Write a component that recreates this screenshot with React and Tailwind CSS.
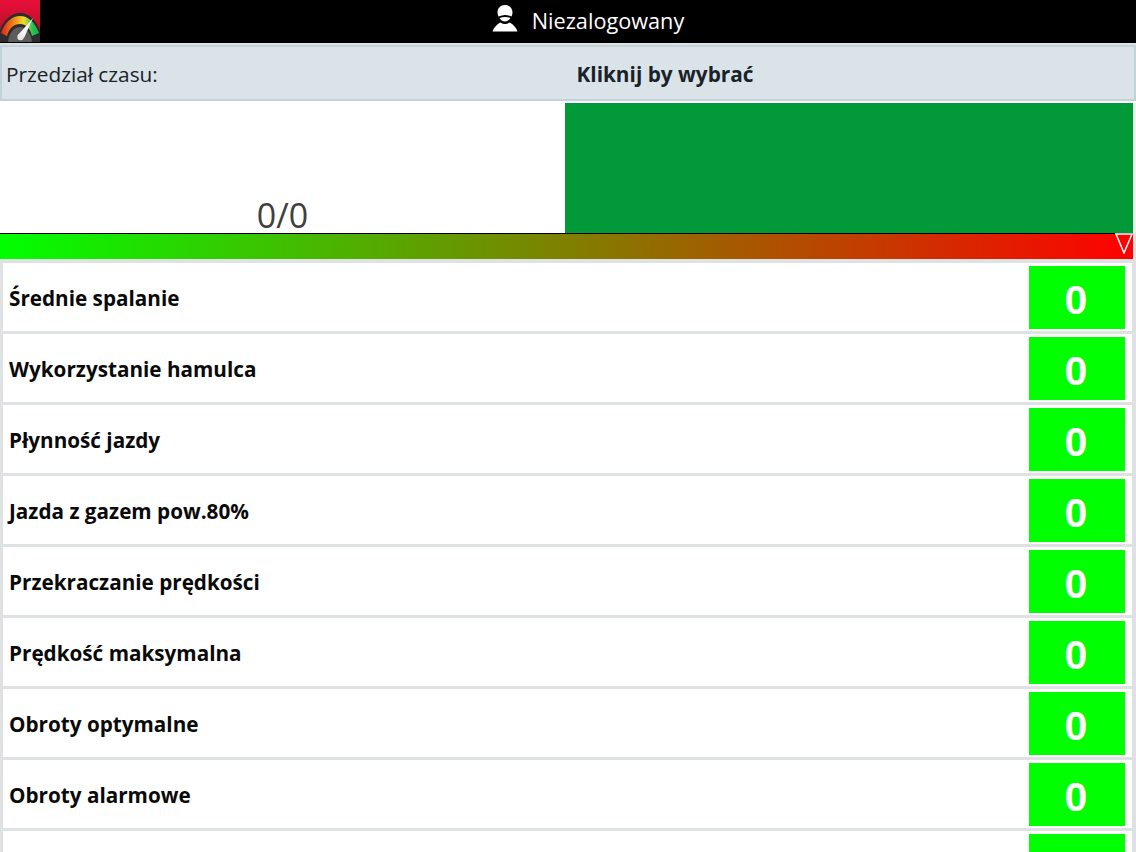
const FONT = 'font-["Open_Sans","Noto_Sans",sans-serif]';

const rows = [
  { label: 'Średnie spalanie', value: 0 },
  { label: 'Wykorzystanie hamulca', value: 0 },
  { label: 'Płynność jazdy', value: 0 },
  { label: 'Jazda z gazem pow.80%', value: 0 },
  { label: 'Przekraczanie prędkości', value: 0 },
  { label: 'Prędkość maksymalna', value: 0 },
  { label: 'Obroty optymalne', value: 0 },
  { label: 'Obroty alarmowe', value: 0 },
  { label: '', value: null }, // only the top of this row fits on screen
];

const Gauge = () => (
  <svg width="40" height="42" viewBox="0 0 40 42" className="block">
    <defs>
      <linearGradient id="red" x1="0" y1="0" x2="0" y2="1">
        <stop offset="0" stopColor="#e8103a" />
        <stop offset="1" stopColor="#a80f22" />
      </linearGradient>
      <linearGradient id="arc" x1="0" y1="0" x2="1" y2="0">
        <stop offset="0" stopColor="#e0201c" />
        <stop offset="0.4" stopColor="#f09a18" />
        <stop offset="0.6" stopColor="#f0dc30" />
        <stop offset="0.85" stopColor="#20c050" />
        <stop offset="1" stopColor="#18b048" />
      </linearGradient>
    </defs>
    <rect width="40" height="42" fill="url(#red)" />
    <path d="M0 42V30C4 19 12 13 20 13C29 13 36 20 40 31V42Z" fill="#2c2c2c" />
    <path d="M1 33C5 22 12 16 20 16C28 16 35 22 39 33L32 36C30 28 26 24 20 24C14 24 9 28 7 36Z" fill="url(#arc)" />
    <path d="M8 42C9 33 14 27 20 27C26 27 31 33 32 42Z" fill="#5c5c5c" />
    <path d="M33 18L24 38L18 35Z" fill="#f4f4f4" />
    <circle cx="20.5" cy="37" r="3.2" fill="#e8e8e8" />
  </svg>
);

const UserIcon = () => (
  <svg width="26" height="28" viewBox="0 0 26 28" fill="white" className="block">
    <path d="M13 1C8.5 1 5.5 4.2 5.5 8.5C5.5 10 5.8 11.2 6.5 12.5C11 10.5 15 10.5 19.5 12.5C20.2 11.2 20.5 10 20.5 8.5C20.5 4.2 17.5 1 13 1Z" />
    <path d="M7.5 14C9 16.4 10.8 17.5 13 17.5C15.2 17.5 17 16.4 18.5 14C14.5 12.6 11.5 12.6 7.5 14Z" />
    <path d="M8.5 18.5C6 19.5 2 23 0.5 27.5H25.5C24 23 20 19.5 17.5 18.5C14.5 20.5 11.5 20.5 8.5 18.5Z" />
  </svg>
);

const Row = ({ label, value }) => (
  <div className="flex h-[68px] shrink-0 items-center justify-between bg-white pl-[6px] pr-[7px]">
    <span className="pt-[4px] text-[20.7px] font-bold text-[#0a0a0a]">{label}</span>
    <div className='mt-px flex h-[63px] w-[96px] items-center justify-center bg-[#00ff00] pr-[2px] pt-[7px] font-["Liberation_Sans",sans-serif] text-[41px] font-bold text-white'>
      {value}
    </div>
  </div>
);

export default function App() {
  return (
    <div className={`flex h-[852px] w-[1136px] flex-col overflow-hidden bg-[#dfe2e3] ${FONT}`}>
      <header className="relative flex h-[43px] shrink-0 items-center justify-center bg-black">
        <div className="absolute left-0 top-0">
          <Gauge />
        </div>
        <div className="flex items-center gap-[14px] pl-[40px]">
          <div className="-mt-[7px]">
            <UserIcon />
          </div>
          <span className="text-[21.7px] text-white">Niezalogowany</span>
        </div>
      </header>

      <div className="relative mt-[2px] flex h-[56px] shrink-0 items-center justify-center border-2 border-[#c3d2d8] bg-[#d9e3e8] pt-[4px] text-[20.8px] text-[#1a2228]">
        <span className="absolute left-[4px]">Przedział czasu:</span>
        <span className="pl-[194px] font-bold">Kliknij by wybrać</span>
      </div>

      <div className="flex h-[132px] shrink-0 bg-white pt-[2px]">
        <div className="flex w-[565px] items-end justify-center bg-white">
          <span className="text-[34px] leading-[36px] text-[#404040]">0/0</span>
        </div>
        <div className="w-[568px] bg-[#029a39]" />
        <div className="w-[3px] bg-[#eef0f0]" />
      </div>

      <div className="relative mr-[3px] h-[26px] shrink-0 border-t border-black bg-[linear-gradient(to_right,#00ff00,#ff0000)]">
        <svg width="18" height="21" viewBox="0 0 18 21" className="absolute right-0 -top-px">
          <path d="M1 1H17L9 20Z" fill="none" stroke="white" strokeWidth="1.5" />
        </svg>
      </div>

      <div className="flex flex-col gap-[3px] pl-[3px] pr-[4px] pt-[4px]">
        {rows.map((row, i) => (
          <Row key={i} label={row.label} value={row.value} />
        ))}
      </div>
    </div>
  );
}
